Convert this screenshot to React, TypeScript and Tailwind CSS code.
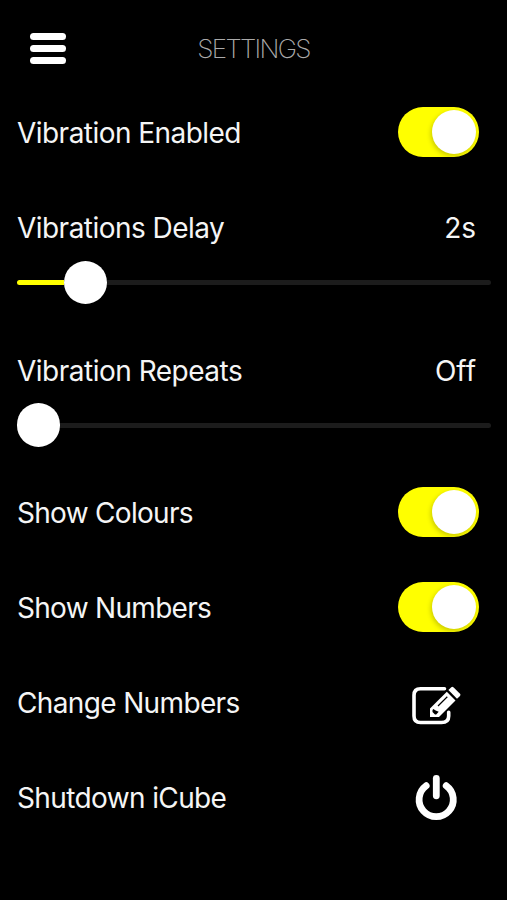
import { ReactNode } from "react";

interface LabelProps {
  className?: string;
  children: ReactNode;
}

interface RowProps {
  label: ReactNode;
  children: ReactNode;
}

interface SliderRowProps {
  label: ReactNode;
  value: ReactNode;
  percent: number;
}

const Label = ({ className = "", children }: LabelProps) => (
  <span
    className={`whitespace-nowrap text-[28px] leading-9 text-[#f5f5f5] ${className}`}
  >
    {children}
  </span>
);

const Toggle = () => (
  <button
    role="switch"
    aria-checked="true"
    className="mr-7 mb-px flex h-[50px] w-[81.5px] items-center justify-end rounded-full bg-[#ffff00] pr-[3px]"
  >
    <span className="size-11 rounded-full bg-white shadow-[-1px_2px_5px_rgba(0,0,0,0.22)]" />
  </button>
);

const Row = ({ label, children }: RowProps) => (
  <div className="flex h-[95px] items-center justify-between pl-[17px]">
    {label}
    {children}
  </div>
);

const SliderRow = ({ label, value, percent }: SliderRowProps) => (
  <div className="h-[142.5px] pt-[30px] pr-4 pl-[17px]">
    <div className="flex h-9 items-center justify-between pr-[15px]">
      {label}
      {value}
    </div>
    <div className="mt-[14.5px] -ml-[0.5px] flex h-11 items-center">
      <div
        className="h-[5px] rounded-l-full bg-[#ffff00]"
        style={{ width: `${percent}%` }}
      />
      <div className="size-[43.5px] shrink-0 rounded-full bg-white" />
      <div className="h-[5px] flex-1 rounded-r-full bg-[#1c1c1c]" />
    </div>
  </div>
);

const EditIcon = () => (
  <svg width="75" height="60" viewBox="0 0 75 60" fill="none">
    <path
      d="M44.5 13.7H20.5Q14 13.7 14 20.2V41Q14 47.5 20.5 47.5H41.5Q48.7 47.5 48.7 41V37.2"
      stroke="#fff"
      strokeWidth="3.6"
      strokeLinecap="round"
    />
    <path d="M46.8 16.7L55.5 25.4L39 42H30V33.5Z" fill="#fff" />
    <path
      d="M48.4 15.1L51.3 12.2Q52.3 11.2 53.4 12.2L60 18.8Q61 19.9 60 20.9L57 23.8Z"
      fill="#fff"
    />
    <path d="M38 31L47.3 21.8" stroke="#000" strokeWidth="1.2" />
    <path d="M33.4 34L35.7 35.4L38.7 36.8L36.2 39.5H35L32.5 37V35Z" fill="#000" />
  </svg>
);

const PowerIcon = () => (
  <svg width="75" height="60" viewBox="0 0 75 60" fill="none">
    <g stroke="#fff" strokeWidth="6.8" strokeLinecap="round">
      <path d="M26.2 18.7A17.1 17.1 0 1 0 46.2 18.7" />
      <path d="M36.3 11.5V28.8" />
    </g>
  </svg>
);

export default function App() {
  return (
    <div className="h-[900px] w-[507px] overflow-hidden bg-black font-['Inter',sans-serif]">
      <header className="grid h-[85px] grid-cols-[1fr_auto_1fr] items-center pt-3 pl-[30px]">
        <button aria-label="Menu" className="flex w-9 flex-col gap-[5px]">
          <span className="h-[7px] w-9 rounded-full bg-white" />
          <span className="h-[7px] w-9 rounded-full bg-white" />
          <span className="h-[7px] w-9 rounded-full bg-white" />
        </button>
        <h1 className="mr-[30px] text-[26px] font-extralight tracking-[-1.7px] text-[#aaa]">
          SETTINGS
        </h1>
      </header>
      <main>
        <Row label={<Label className="tracking-[-0.54px]">Vibration Enabled</Label>}>
          <Toggle />
        </Row>
        <SliderRow
          label={<Label className="tracking-[-0.54px]">Vibrations Delay</Label>}
          value={<Label>2s</Label>}
          percent={10}
        />
        <SliderRow
          label={<Label className="tracking-[-0.5px]">Vibration Repeats</Label>}
          value={<Label>Off</Label>}
          percent={0}
        />
        <Row label={<Label className="tracking-[-0.7px]">Show Colours</Label>}>
          <Toggle />
        </Row>
        <Row label={<Label className="tracking-[-0.7px]">Show Numbers</Label>}>
          <Toggle />
        </Row>
        <Row label={<Label className="tracking-[-0.64px]">Change Numbers</Label>}>
          <button aria-label="Change numbers" className="mt-1 mr-8">
            <EditIcon />
          </button>
        </Row>
        <Row label={<Label className="tracking-[-0.62px]">Shutdown iCube</Label>}>
          <button aria-label="Shutdown" className="mr-8 mb-0.5">
            <PowerIcon />
          </button>
        </Row>
      </main>
    </div>
  );
}
